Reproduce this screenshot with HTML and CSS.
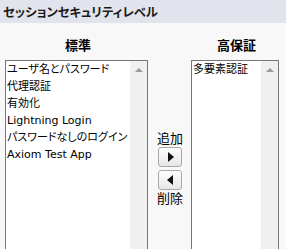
FILE: index.html
```html
<!DOCTYPE html>
<html lang="ja">
<head>
  <meta charset="UTF-8" />
  <title>セッションセキュリティレベル</title>
  <link rel="stylesheet" href="styles.css">
</head>
<body>
  <div class="section-title">セッションセキュリティレベル</div>

  <div class="picker">
    <div class="column col-left">
      <div class="col-label">標準</div>
      <div class="listbox">
        <div class="items">
          <div class="item">ユーザ名とパスワード</div>
          <div class="item">代理認証</div>
          <div class="item">有効化</div>
          <div class="item">Lightning Login</div>
          <div class="item">パスワードなしのログイン</div>
          <div class="item">Axiom Test App</div>
        </div>
        <div class="scroll"><span class="arrow-up"></span></div>
      </div>
    </div>

    <div class="mover">
      <div class="mover-label">追加</div>
      <button class="move-btn"><span class="tri tri-right"></span></button>
      <button class="move-btn"><span class="tri tri-left"></span></button>
      <div class="mover-label">削除</div>
    </div>

    <div class="column col-right">
      <div class="col-label">高保証</div>
      <div class="listbox">
        <div class="items">
          <div class="item">多要素認証</div>
        </div>
        <div class="scroll"><span class="arrow-up"></span></div>
      </div>
    </div>
  </div>
</body>
</html>
```

FILE: styles.css
```css
body {
  margin: 0;
  height: 249px;
  background: #f8f8f8;
  font-family: "Liberation Sans", "Noto Sans CJK JP", sans-serif;
  font-feature-settings: "palt";
  color: #000;
  overflow: hidden;
}
.section-title {
  height: 23px;
  line-height: 26px;
  background: #e1e4ec;
  padding-left: 3px;
  font-size: 12.3px;
  font-weight: bold;
  color: #1a1a1a;
}
.picker {
  display: flex;
  padding-left: 5px;
  padding-top: 14px;
}
.column {
  display: flex;
  flex-direction: column;
}
.col-left {
  width: 143px;
}
.col-right {
  width: 88px;
}
.col-label {
  text-align: center;
  font-size: 13px;
  font-weight: bold;
  line-height: 18px;
  height: 23px;
  padding-left: 3px;
}
.listbox {
  display: flex;
  height: 220px;
  border: 1px solid #777;
  background: #fff;
}
.items {
  flex: 1;
  padding-left: 1px;
  font-family: "DejaVu Sans", "Noto Sans CJK JP", sans-serif;
  font-size: 11px;
  line-height: 17px;
  white-space: nowrap;
  overflow: hidden;
}
.scroll {
  width: 17px;
  background: #f0f0f0;
  display: flex;
  justify-content: center;
  padding-top: 7px;
  box-sizing: border-box;
}
.arrow-up {
  width: 0;
  height: 0;
  border-left: 4px solid transparent;
  border-right: 4px solid transparent;
  border-bottom: 4px solid #9a9a9a;
}
.mover {
  width: 43px;
  display: flex;
  flex-direction: column;
  align-items: center;
  padding-top: 95px;
  box-sizing: border-box;
}
.mover-label {
  font-size: 13px;
  line-height: 14px;
  height: 14px;
  padding-left: 1px;
}
.move-btn {
  width: 24px;
  height: 20px;
  margin: 1px 0 2px 1px;
  padding: 0;
  border: 1px solid #a8a8a8;
  border-radius: 3px;
  background: linear-gradient(#ffffff, #e6e6e6);
  display: flex;
  align-items: center;
  justify-content: center;
}
.tri {
  width: 0;
  height: 0;
  border-top: 5px solid transparent;
  border-bottom: 5px solid transparent;
}
.tri-right {
  border-left: 6px solid #111;
  margin-left: 1px;
}
.tri-left {
  border-right: 6px solid #111;
  margin-right: 1px;
}
```
